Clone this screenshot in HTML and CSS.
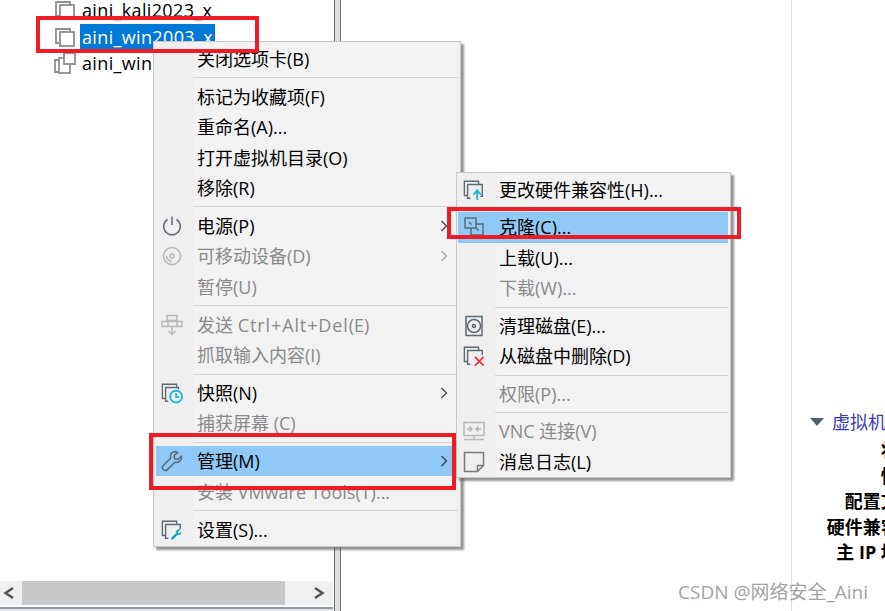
FILE: index.html
```html
<!DOCTYPE html>
<html lang="zh-CN">
<head>
<meta charset="utf-8">
<title>VMware 菜单</title>
<link rel="stylesheet" href="styles.css">
</head>
<body>
<div class="app">
  <aside class="library">
    <ul class="tree">
      <li class="tree-row">
        <svg class="tree-icon" viewBox="0 0 22 22"><path class="ic-g" d="M5 17H2V3h14v3"/><rect class="ic-g" x="6" y="6" width="14" height="14"/></svg>
        <span class="tree-label">aini_kali2023_x</span>
      </li>
      <li class="tree-row">
        <svg class="tree-icon" viewBox="0 0 22 22"><path class="ic-g" d="M5 17H2V3h14v3"/><rect class="ic-g" x="6" y="6" width="14" height="14"/></svg>
        <span class="tree-label selected">aini_win2003_x</span>
      </li>
      <li class="tree-row">
        <svg class="tree-icon" viewBox="0 0 22 22"><path class="ic-g" d="M6 20H1V8h4"/><rect class="ic-g fill-w" x="5" y="6" width="11" height="15"/><rect class="ic-g fill-w" x="10" y="1" width="11" height="11"/></svg>
        <span class="tree-label">aini_win2016</span>
      </li>
    </ul>
    <div class="hscroll">
      <svg class="scroll-arrow" viewBox="0 0 22 24"><path d="M13 7 5.500 12l7.500 5"/></svg>
      <div class="scroll-track"><div class="scroll-thumb"></div></div>
      <svg class="scroll-arrow" viewBox="0 0 22 24"><path d="M4 7l7.500 5L4 17"/></svg>
    </div>
  </aside>
  <div class="splitter"></div>
  <main class="content">
    <section class="details">
      <h2 class="details-title"><span class="caret"></span>虚拟机详细信息</h2>
      <dl class="details-list">
        <dt>状态:</dt>
        <dt>快照:</dt>
        <dt>配置文件:</dt>
        <dt>硬件兼容性:</dt>
        <dt>主 IP 地址:</dt>
      </dl>
    </section>
  </main>
</div>

<div class="menu menu-main">
  <div class="item"><span class="item-icon"></span><span class="item-text">关闭选项卡(B)</span></div>
  <div class="sep"></div>
  <div class="item"><span class="item-icon"></span><span class="item-text">标记为收藏项(F)</span></div>
  <div class="item"><span class="item-icon"></span><span class="item-text">重命名(A)...</span></div>
  <div class="item"><span class="item-icon"></span><span class="item-text">打开虚拟机目录(O)</span></div>
  <div class="item"><span class="item-icon"></span><span class="item-text">移除(R)</span></div>
  <div class="sep"></div>
  <div class="item">
    <span class="item-icon"><svg viewBox="0 0 22 22"><path class="ic-d" d="M6.500 4.500a8.300 8.300 0 1 0 9 0M11 1.500V10"/></svg></span>
    <span class="item-text">电源(P)</span><svg class="chev" viewBox="0 0 8 12"><path d="M1.500 1 6.500 6l-5 5"/></svg>
  </div>
  <div class="item off">
    <span class="item-icon"><svg viewBox="0 0 22 22"><circle class="ic-l" cx="11" cy="11" r="8.500"/><circle class="ic-l" cx="11" cy="11" r="2"/><path class="ic-l" d="M5.500 11a5.500 5.500 0 0 0 5.500 5.500"/></svg></span>
    <span class="item-text">可移动设备(D)</span><svg class="chev" viewBox="0 0 8 12"><path d="M1.500 1 6.500 6l-5 5"/></svg>
  </div>
  <div class="item off"><span class="item-icon"></span><span class="item-text">暂停(U)</span></div>
  <div class="sep"></div>
  <div class="item off">
    <span class="item-icon"><svg viewBox="0 0 22 22"><path class="ic-l" d="M6 1.500h10v5H6zM1 7.500h20v5H1zM7 7.500v5M16 7.500v5M11 13v7M7.500 17l3.500 3.500 3.500-3.500"/></svg></span>
    <span class="item-text">发送 <span class="wide">Ctrl+Alt+Del</span>(E)</span>
  </div>
  <div class="item off"><span class="item-icon"></span><span class="item-text">抓取输入内容(I)</span></div>
  <div class="sep"></div>
  <div class="item">
    <span class="item-icon"><svg viewBox="0 0 24 24"><path class="ic-d" d="M5 18H1.500V2.500H17V6"/><path class="ic-d" d="M8 21H5V6h14v2"/><circle class="ic-c" cx="16.500" cy="16" r="6.500"/><path class="ic-c" d="M16.500 12v4.500H20"/></svg></span>
    <span class="item-text">快照(N)</span><svg class="chev" viewBox="0 0 8 12"><path d="M1.500 1 6.500 6l-5 5"/></svg>
  </div>
  <div class="item off"><span class="item-icon"></span><span class="item-text">捕获屏幕 (C)</span></div>
  <div class="sep"></div>
  <div class="item hot">
    <span class="item-icon"><svg viewBox="0 0 22 22"><path class="ic-d" d="M14.500 1.500c-3 0-5.500 2.500-5 5.500.1.800.1 1.200-.4 1.700L2.300 15.500a2.900 2.900 0 0 0 4.100 4.100l6.900-6.800c.5-.5.900-.5 1.700-.4 3.400.4 6.200-2.800 5.300-6.200l-3.500 3.300-3-.7-.7-3 3.400-3.300c-.6-.3-1.300-.5-2-.5z"/></svg></span>
    <span class="item-text">管理(M)</span><svg class="chev" viewBox="0 0 8 12"><path d="M1.500 1 6.500 6l-5 5"/></svg>
  </div>
  <div class="item off"><span class="item-icon"></span><span class="item-text">安装 VMware Tools(T)...</span></div>
  <div class="sep"></div>
  <div class="item">
    <span class="item-icon"><svg viewBox="0 0 24 24"><path class="ic-d" d="M5 18H1.500V2.500H17V6"/><path class="ic-d" d="M8 21H5V6h16v5"/><path class="ic-w" d="M21.500 11.500l-3 2.800.8 1.500 3-2.300c.3 2.500-1.800 4.500-4.100 3.700L12.500 23 10.500 21l5.700-5.200c-.8-2.600 2.500-5.300 5.300-4.300z"/></svg></span>
    <span class="item-text">设置(S)...</span>
  </div>
</div>

<div class="menu menu-sub">
  <div class="item">
    <span class="item-icon"><svg viewBox="0 0 24 24"><path class="ic-d" d="M5 18H1.500V2.500H17V6"/><path class="ic-d" d="M8 21H5V6h16v13h-2"/><path class="ic-c" d="M15.500 23v-9M11.500 17l4-4.500 4 4.500"/></svg></span>
    <span class="item-text">更改硬件兼容性(H)...</span>
  </div>
  <div class="sep"></div>
  <div class="item hot">
    <span class="item-icon"><svg viewBox="0 0 22 22"><path class="ic-d" d="M2 2h11v10H2z"/><path class="ic-d" d="M8 12v7h12V8h-7"/><path class="ic-d" d="M6 6l2.500 2.500M13 12l2.500 2.500"/></svg></span>
    <span class="item-text">克隆(C)...</span>
  </div>
  <div class="item"><span class="item-icon"></span><span class="item-text">上载(U)...</span></div>
  <div class="item off"><span class="item-icon"></span><span class="item-text">下载(W)...</span></div>
  <div class="sep"></div>
  <div class="item">
    <span class="item-icon"><svg viewBox="0 0 22 22"><rect class="ic-d" x="3" y="1.500" width="16" height="19"/><circle class="ic-d" cx="11" cy="11" r="6.500"/><circle class="ic-d" cx="11" cy="11" r="1.500"/></svg></span>
    <span class="item-text">清理磁盘(E)...</span>
  </div>
  <div class="item">
    <span class="item-icon"><svg viewBox="0 0 24 24"><path class="ic-d" d="M5 18H1.500V2.500H17V6"/><path class="ic-d" d="M8 21H5V6h16v5"/><path class="ic-r" d="M13 13l9.500 9.500M22.500 13 13 22.500"/></svg></span>
    <span class="item-text">从磁盘中删除(D)</span>
  </div>
  <div class="sep"></div>
  <div class="item off"><span class="item-icon"></span><span class="item-text">权限(P)...</span></div>
  <div class="sep"></div>
  <div class="item off">
    <span class="item-icon"><svg viewBox="0 0 22 22"><path class="ic-l" d="M1 2.500h20v13H1zM1 19.500h20M11 15.500v4M4 9h5M6.500 6.500 9 9l-2.500 2.500M18 9h-5M15.500 6.500 13 9l2.500 2.500"/></svg></span>
    <span class="item-text">VNC 连接(V)</span>
  </div>
  <div class="item">
    <span class="item-icon"><svg viewBox="0 0 22 22"><path class="ic-g2" d="M1.500 1.500h19v13l-6 6h-13zM20.500 14.500h-6v6"/></svg></span>
    <span class="item-text">消息日志(L)</span>
  </div>
</div>

<div class="mark mark-tree"></div>
<div class="mark mark-clone"></div>
<div class="mark mark-manage"></div>
<div class="watermark">CSDN @网络安全_Aini</div>
</body>
</html>
```

FILE: styles.css
```css
* { box-sizing: border-box; }
html, body { margin: 0; padding: 0; height: 100%; overflow: hidden; background: #fff; }
body { font-family: "Open Sans", "Noto Sans CJK SC", sans-serif; font-size: 18px; color: #000; }
.app { display: flex; height: 611px; width: 885px; overflow: hidden; }

.library { width: 334px; flex: none; display: flex; flex-direction: column; justify-content: space-between; }
.tree { list-style: none; margin: -3px 0 0; padding: 0 0 0 54px; }
.tree-row { display: flex; align-items: center; height: 26.500px; gap: 4px; }
.tree-icon { width: 22px; height: 22px; flex: none; }
.tree-label { padding: 0 2px; line-height: 26px; font-size: 18px; letter-spacing: .35px; white-space: nowrap; }
.tree-label.selected { background: #0078d7; color: #fff; }

.hscroll { display: flex; align-items: flex-start; height: 30px; background: linear-gradient(#f0f0f0 24px, #fff 24px, #fff 26px, #8d9aa5 26px, #8d9aa5 28px, #e3e5e8 28px); border-right: 1px solid #fff; }
.scroll-arrow { width: 22px; height: 24px; flex: none; }
.scroll-arrow path { fill: none; stroke: #555; stroke-width: 2.500; }
.scroll-track { flex: 1; height: 24px; }
.scroll-thumb { width: 263px; height: 24px; background: #c9c9c9; }

.splitter { width: 7px; flex: none; background: #dfe1e4; border-left: 1px solid #6d7074; border-right: 1px solid #6d7074; }

.content { flex: 1; background: #fff; }
.details { margin-left: 450px; width: 400px; height: 100%; border-left: 1px solid #dcdcdc; padding: 409px 0 0 18px; }
.details-title { margin: 0; font-weight: 400; font-size: 18px; line-height: 26px; color: #3c3cb4; display: flex; align-items: center; gap: 8px; white-space: nowrap; }
.caret { width: 0; height: 0; border-left: 7px solid transparent; border-right: 7px solid transparent; border-top: 8px solid #4c6272; }
.details-list { margin: 3px 0 0; width: 112px; }
.details-list dt { font-weight: 700; font-size: 18px; line-height: 25.500px; text-align: right; white-space: nowrap; }

.menu { position: absolute; background: linear-gradient(90deg, #efefef 40px, #f2f2f2 40px); border: 1px solid #c8c8c8; box-shadow: 3px 3px 2px rgba(90,90,90,.65); }
.menu-main { left: 153px; top: 41px; width: 308px; height: 506px; padding: 1.500px 2px 0; }
.menu-sub { left: 456px; top: 172px; width: 275px; height: 306px; padding: 1.500px 2px 0 1px; }
.item { display: flex; align-items: center; height: 30.500px; white-space: nowrap; }
.menu-main .item { margin-right: 6px; }
.item.off { color: #8a8a8a; }
.item.hot { background: #90c8f6; }
.item-icon { width: 41px; flex: none; display: flex; padding-left: 5px; align-items: center; }
.item-icon svg { width: 22px; height: 22px; display: block; }
.item-text { flex: 1; padding-bottom: 2px; }
.wide { letter-spacing: .9px; }
.chev { width: 8px; height: 12px; flex: none; margin-right: 4px; }
.chev path { fill: none; stroke: #444; stroke-width: 1.300; }
.item.off .chev path { stroke: #aaa; }
.sep { height: 7.300px; margin-left: 37px; display: flex; align-items: center; }
.sep::before { content: ""; display: block; width: 100%; height: 1px; background: #d4d4d4; }
.menu-sub .sep { height: 7px; }

.ic-g, .ic-g2, .ic-d, .ic-l, .ic-c, .ic-r, .ic-w { fill: none; stroke-width: 1.500; }
.ic-g { stroke: #8e8e8e; stroke-width: 1.800; }
.ic-g.fill-w { fill: #fff; }
.ic-g2 { stroke: #7a7a7a; }
.ic-d { stroke: #5e6b75; }
.ic-l { stroke: #b9b9b9; }
.ic-c { stroke: #1fb4d8; stroke-width: 2; fill: #f2f2f2; }
.ic-r { stroke: #e8323c; stroke-width: 1.800; }
.ic-w { fill: #12a5cc; stroke: none; }

.mark { position: absolute; border: 4px solid #ee1c25; pointer-events: none; }
.mark-tree { left: 36px; top: 16px; width: 223px; height: 37px; }
.mark-clone { left: 447px; top: 207px; width: 294px; height: 32px; }
.mark-manage { left: 149px; top: 433px; width: 307px; height: 57px; }

.watermark { position: absolute; left: 678px; top: 580px; font-size: 19px; line-height: 24px; color: #a3a3a3; white-space: nowrap; }
```
